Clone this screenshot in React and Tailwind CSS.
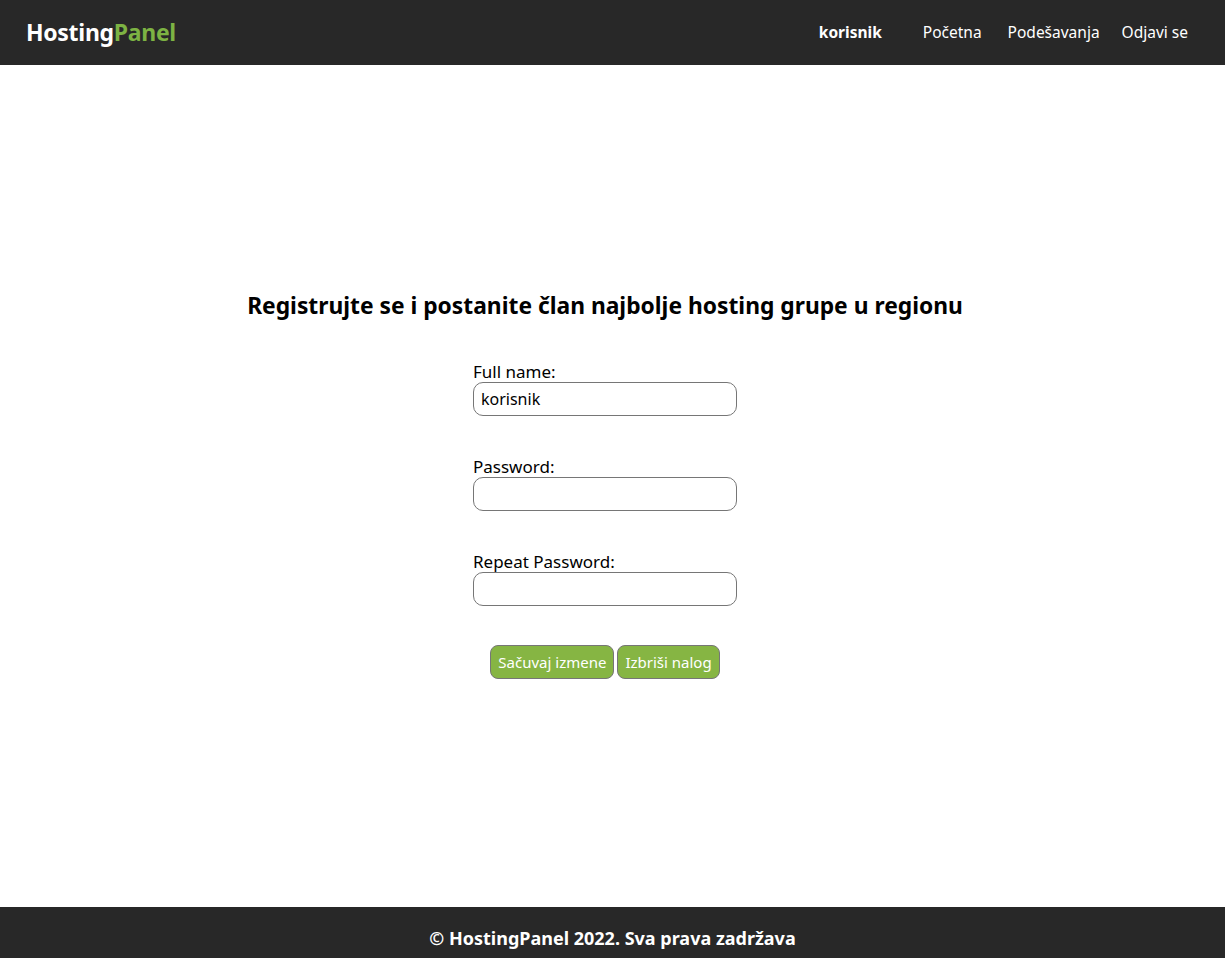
import { useState } from "react"

export default function App() {
  const [name, setName] = useState("korisnik")
  const [pass, setPass] = useState("")
  const [repeat, setRepeat] = useState("")

  const Field = ({ label, value, onChange, type }) => (
    <div className="flex flex-col items-start">
      <label className="text-[17px] leading-[20px] text-black">{label}</label>
      <input
        type={type}
        value={value}
        onChange={(e) => onChange(e.target.value)}
        className="w-[264px] h-[34px] rounded-[10px] border border-[#767676] bg-white px-[7px] text-[16px] text-black outline-none"
      />
    </div>
  )

  return (
    <div className="min-h-screen flex flex-col bg-white" style={{ fontFamily: '"Noto Sans", "Open Sans", sans-serif' }}>
      <header className="h-[65px] bg-[#282828] flex items-center justify-between pl-[26px] pr-[37px]">
        <div className="text-[23px] font-bold tracking-[-0.3px]">
          <span className="text-white">Hosting</span>
          <span className="text-[#7db343]">Panel</span>
        </div>
        <nav className="flex items-center text-[15.5px] text-white">
          <span className="font-bold mr-[41px]">korisnik</span>
          <a className="mr-[26px]">Početna</a>
          <a className="mr-[22px]">Podešavanja</a>
          <a>Odjavi se</a>
        </nav>
      </header>

      <main className="flex-1 flex flex-col items-center justify-center pr-[15px] pb-[4px]">
        <h1 className="text-[22.8px] font-bold text-black mb-[39px]">Registrujte se i postanite član najbolje hosting grupe u regionu</h1>
        <div className="flex flex-col gap-[41px]">
          <Field label="Full name:" value={name} onChange={setName} type="text" />
          <Field label="Password:" value={pass} onChange={setPass} type="password" />
          <Field label="Repeat Password:" value={repeat} onChange={setRepeat} type="password" />
        </div>
        <div className="flex gap-[3px] mt-[39px]">
          <button className="h-[34px] px-[7px] rounded-[8px] border border-[#767676] bg-[#86b543] text-white text-[15px]">Sačuvaj izmene</button>
          <button className="h-[34px] px-[7px] rounded-[8px] border border-[#767676] bg-[#86b543] text-white text-[15px]">Izbriši nalog</button>
        </div>
      </main>

      <footer className="h-[51px] bg-[#282828] flex items-center justify-center pt-[12px]">
        <p className="text-[18px] font-bold text-white">© HostingPanel 2022. Sva prava zadržava</p>
      </footer>
    </div>
  )
}
